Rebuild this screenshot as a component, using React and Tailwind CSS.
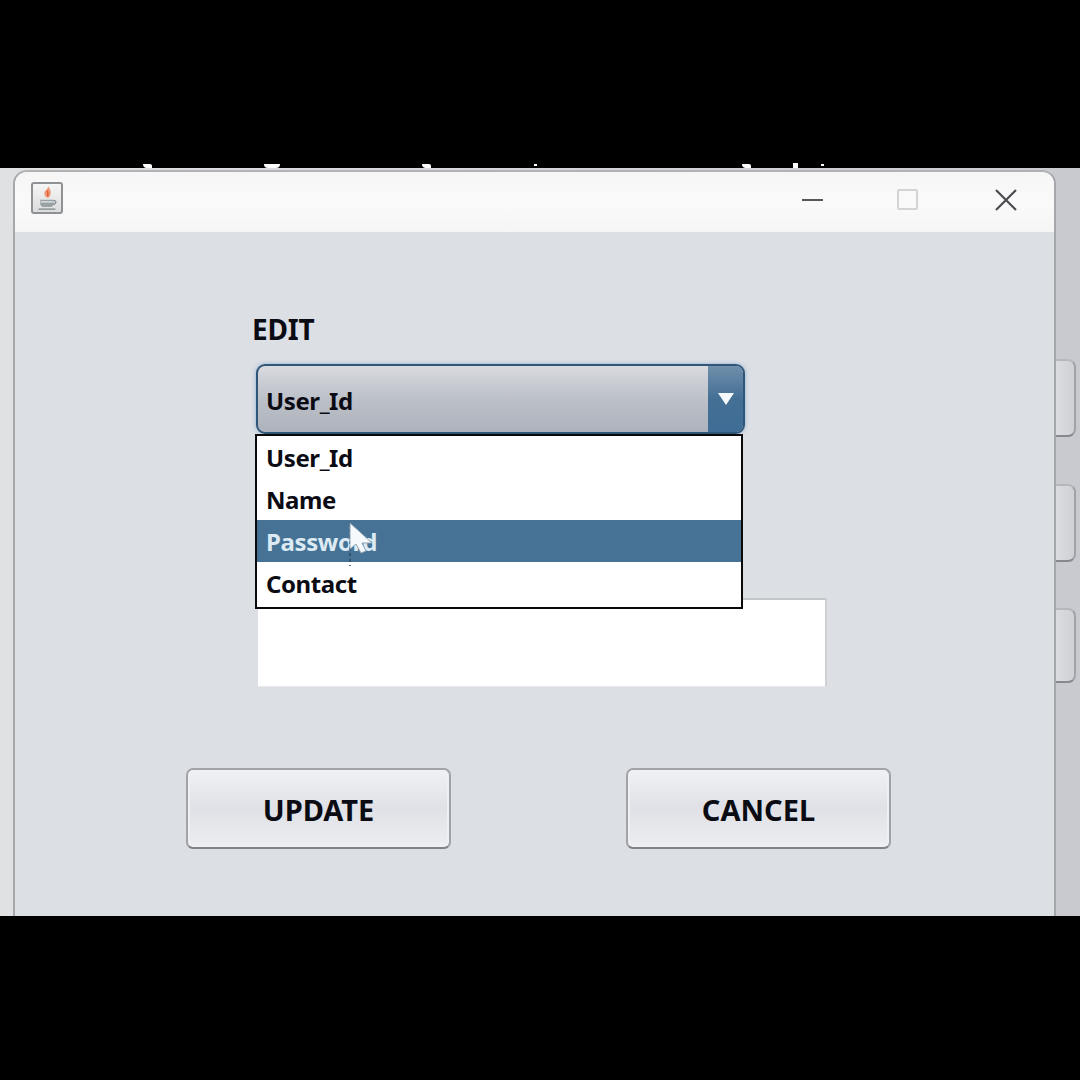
const font = { fontFamily: '"Noto Sans", sans-serif' };

function JavaIcon() {
  return (
    <div className="mb-[3px] flex h-[32px] w-[32px] items-center justify-center rounded-[3px] border-2 border-[#8f9295] bg-gradient-to-b from-[#f6f6f6] to-[#dcdcdc]">
      <svg viewBox="0 0 24 24" className="h-[27px] w-[27px]" fill="none">
        <path d="M12.5 1c2 2.500 2.800 4.500 2.300 7-.3 1.500-1.300 2.500-2 3.500-2-.5-3.800-2-3.600-4.500.2-2.500 3.300-3 3.300-6z" fill="#ee9a78" />
        <path d="M11.800 5c.8 1.500.8 3.500.2 5" stroke="#e0582e" strokeWidth="1.200" />
        <path d="M5.500 13h12v3.500c0 2-1.500 3-3 3h-6c-1.500 0-3-1-3-3z" fill="#98a1a6" />
        <path d="M17.500 14c2.500-.5 3 2.500-.5 3.500" stroke="#7d868b" strokeWidth="1" />
        <path d="M4 21.500h15" stroke="#7d868b" strokeWidth="1.200" />
        <path d="M6 15h11" stroke="#e7e9ea" strokeWidth="1" />
      </svg>
    </div>
  );
}

function SideTab({ heightClass }) {
  return (
    <div className={`${heightClass} w-[21px] rounded-r-[8px] border-y-2 border-r-2 border-t-[#b6b8bc] border-r-[#a0a2a8] border-b-[#85888e] bg-gradient-to-r from-[#dcdde0] to-[#cfd1d5]`} />
  );
}

function ActionButton({ label }) {
  return (
    <button className="flex h-[81px] w-[265px] items-center justify-center rounded-[7px] border-2 border-[#a0a3a8] border-b-[#7f8288] bg-gradient-to-b from-[#f0f1f5] via-[#dfe1e6] to-[#eceef2] pt-[2px] text-[29px] font-bold text-[#0b0b14] shadow-[inset_0_0_0_2px_#eff0f4]">
      {label}
    </button>
  );
}

function Option({ label, active }) {
  return (
    <div className={`flex h-[42px] items-center pl-[9px] pt-[2px] text-[24px] font-bold tracking-[-0.4px] ${active ? "bg-[#467295] text-[#dceaf4]" : "text-[#0b0b14]"}`}>
      {label}
    </div>
  );
}

function Fragment({ className }) {
  return <div className={`absolute bg-white ${className}`} />;
}

export default function App() {
  return (
    <div className="flex h-[1080px] w-[1080px] flex-col overflow-hidden bg-black" style={font}>
      <div className="relative h-[168px] shrink-0">
        <Fragment className="left-[143px] top-[164px] h-[4px] w-[9px] rounded-bl-[6px] rounded-tr-[3px]" />
        <Fragment className="left-[264px] top-[164px] h-[4px] w-[16px] rounded-b-[8px]" />
        <Fragment className="left-[422px] top-[164px] h-[4px] w-[9px] rounded-bl-[6px] rounded-tr-[3px]" />
        <Fragment className="left-[534px] top-[164px] h-[2px] w-[3px]" />
        <Fragment className="left-[742px] top-[164px] h-[4px] w-[9px] rounded-bl-[6px] rounded-tr-[3px]" />
        <Fragment className="left-[793px] top-[163px] h-[5px] w-[5px]" />
        <Fragment className="left-[821px] top-[164px] h-[2px] w-[3px]" />
      </div>
      <div className="relative h-[748px] shrink-0 bg-gradient-to-r from-[#e0e1e3] to-[#c8cacf]">
        <div className="absolute right-0 top-[191px] flex w-[25px] flex-col">
          <SideTab heightClass="h-[78px]" />
          <div className="h-[47px]" />
          <SideTab heightClass="h-[78px]" />
          <div className="h-[46px]" />
          <SideTab heightClass="h-[75px]" />
        </div>
        <div className="absolute bottom-0 left-[13px] top-[2px] flex w-[1043px] flex-col overflow-hidden rounded-t-[14px] border-x-2 border-t-2 border-[#a5a7aa] border-t-[#b0b2b3] bg-[#dcdfe4]">
          <div className="flex h-[60px] shrink-0 items-center bg-gradient-to-b from-[#f6f6f6] via-[#fafafa] to-[#f5f5f5] pb-[5px] pl-[16px] pr-[36px]">
            <JavaIcon />
            <div className="ml-auto flex items-center">
              <div className="h-[2px] w-[21px] bg-[#55585a]" />
              <div className="ml-[74px] h-[21px] w-[21px] rounded-[2px] border-2 border-[#d3d4d6]" />
              <svg viewBox="0 0 24 24" className="ml-[76px] h-[24px] w-[24px]" fill="none" stroke="#4a4c4f" strokeWidth="2.200">
                <path d="M2 2l20 20M22 2L2 22" />
              </svg>
            </div>
          </div>
          <div className="relative flex-1 pl-[171px]">
            <div className="ml-[66px] mt-[78px] text-[28px] font-bold leading-[38px] tracking-[-0.2px] text-[#0b0b14]">EDIT</div>
            <div className="relative ml-[70px] mt-[16px] w-[570px]">
              <div className="flex h-[70px] w-[489px] overflow-hidden rounded-[9px] border-2 border-[#2f5679] bg-gradient-to-b from-[#d8dade] via-[#bcc0c8] to-[#aeb2bc] shadow-[0_0_4px_#8fb0d0]">
                <div className="flex flex-1 items-center pl-[8px] pt-[4px] text-[24px] font-bold tracking-[-0.4px] text-[#0b0b14]">User_Id</div>
                <div className="flex w-[35px] items-center justify-center bg-gradient-to-b from-[#6f8fab] via-[#446f95] to-[#3f6d95]">
                  <svg viewBox="0 0 16 12" className="h-[12px] w-[16px]" fill="#f5f8fb">
                    <path d="M0 0h16L8 12z" />
                  </svg>
                </div>
              </div>
              <div className="absolute -left-[1px] top-[70px] z-10 w-[488px] border-2 border-[#0a0a0a] bg-white pb-[3px]">
                <Option label="User_Id" />
                <Option label="Name" />
                <Option label="Password" active />
                <Option label="Contact" />
                <svg viewBox="0 0 27 44" className="absolute left-[92px] top-[86px] h-[44px] w-[27px]">
                  <path d="M1 1v43" stroke="#2c4a62" strokeWidth="1.500" strokeDasharray="3 3" />
                  <path d="M1 1v26l6-5 5 9 5-2-4-8h10z" fill="#f7fafc" stroke="#8ea4b6" strokeWidth="1" />
                </svg>
              </div>
              <div className="ml-[2px] mt-[164px] h-[89px] w-[569px] border-y border-r-2 border-t-2 border-b-[#e8eaed] border-r-[#cfd1d5] border-t-[#c4c6ca] bg-white" />
            </div>
            <div className="mt-[81px] flex w-[705px] justify-between">
              <ActionButton label="UPDATE" />
              <ActionButton label="CANCEL" />
            </div>
          </div>
        </div>
      </div>
    </div>
  );
}
